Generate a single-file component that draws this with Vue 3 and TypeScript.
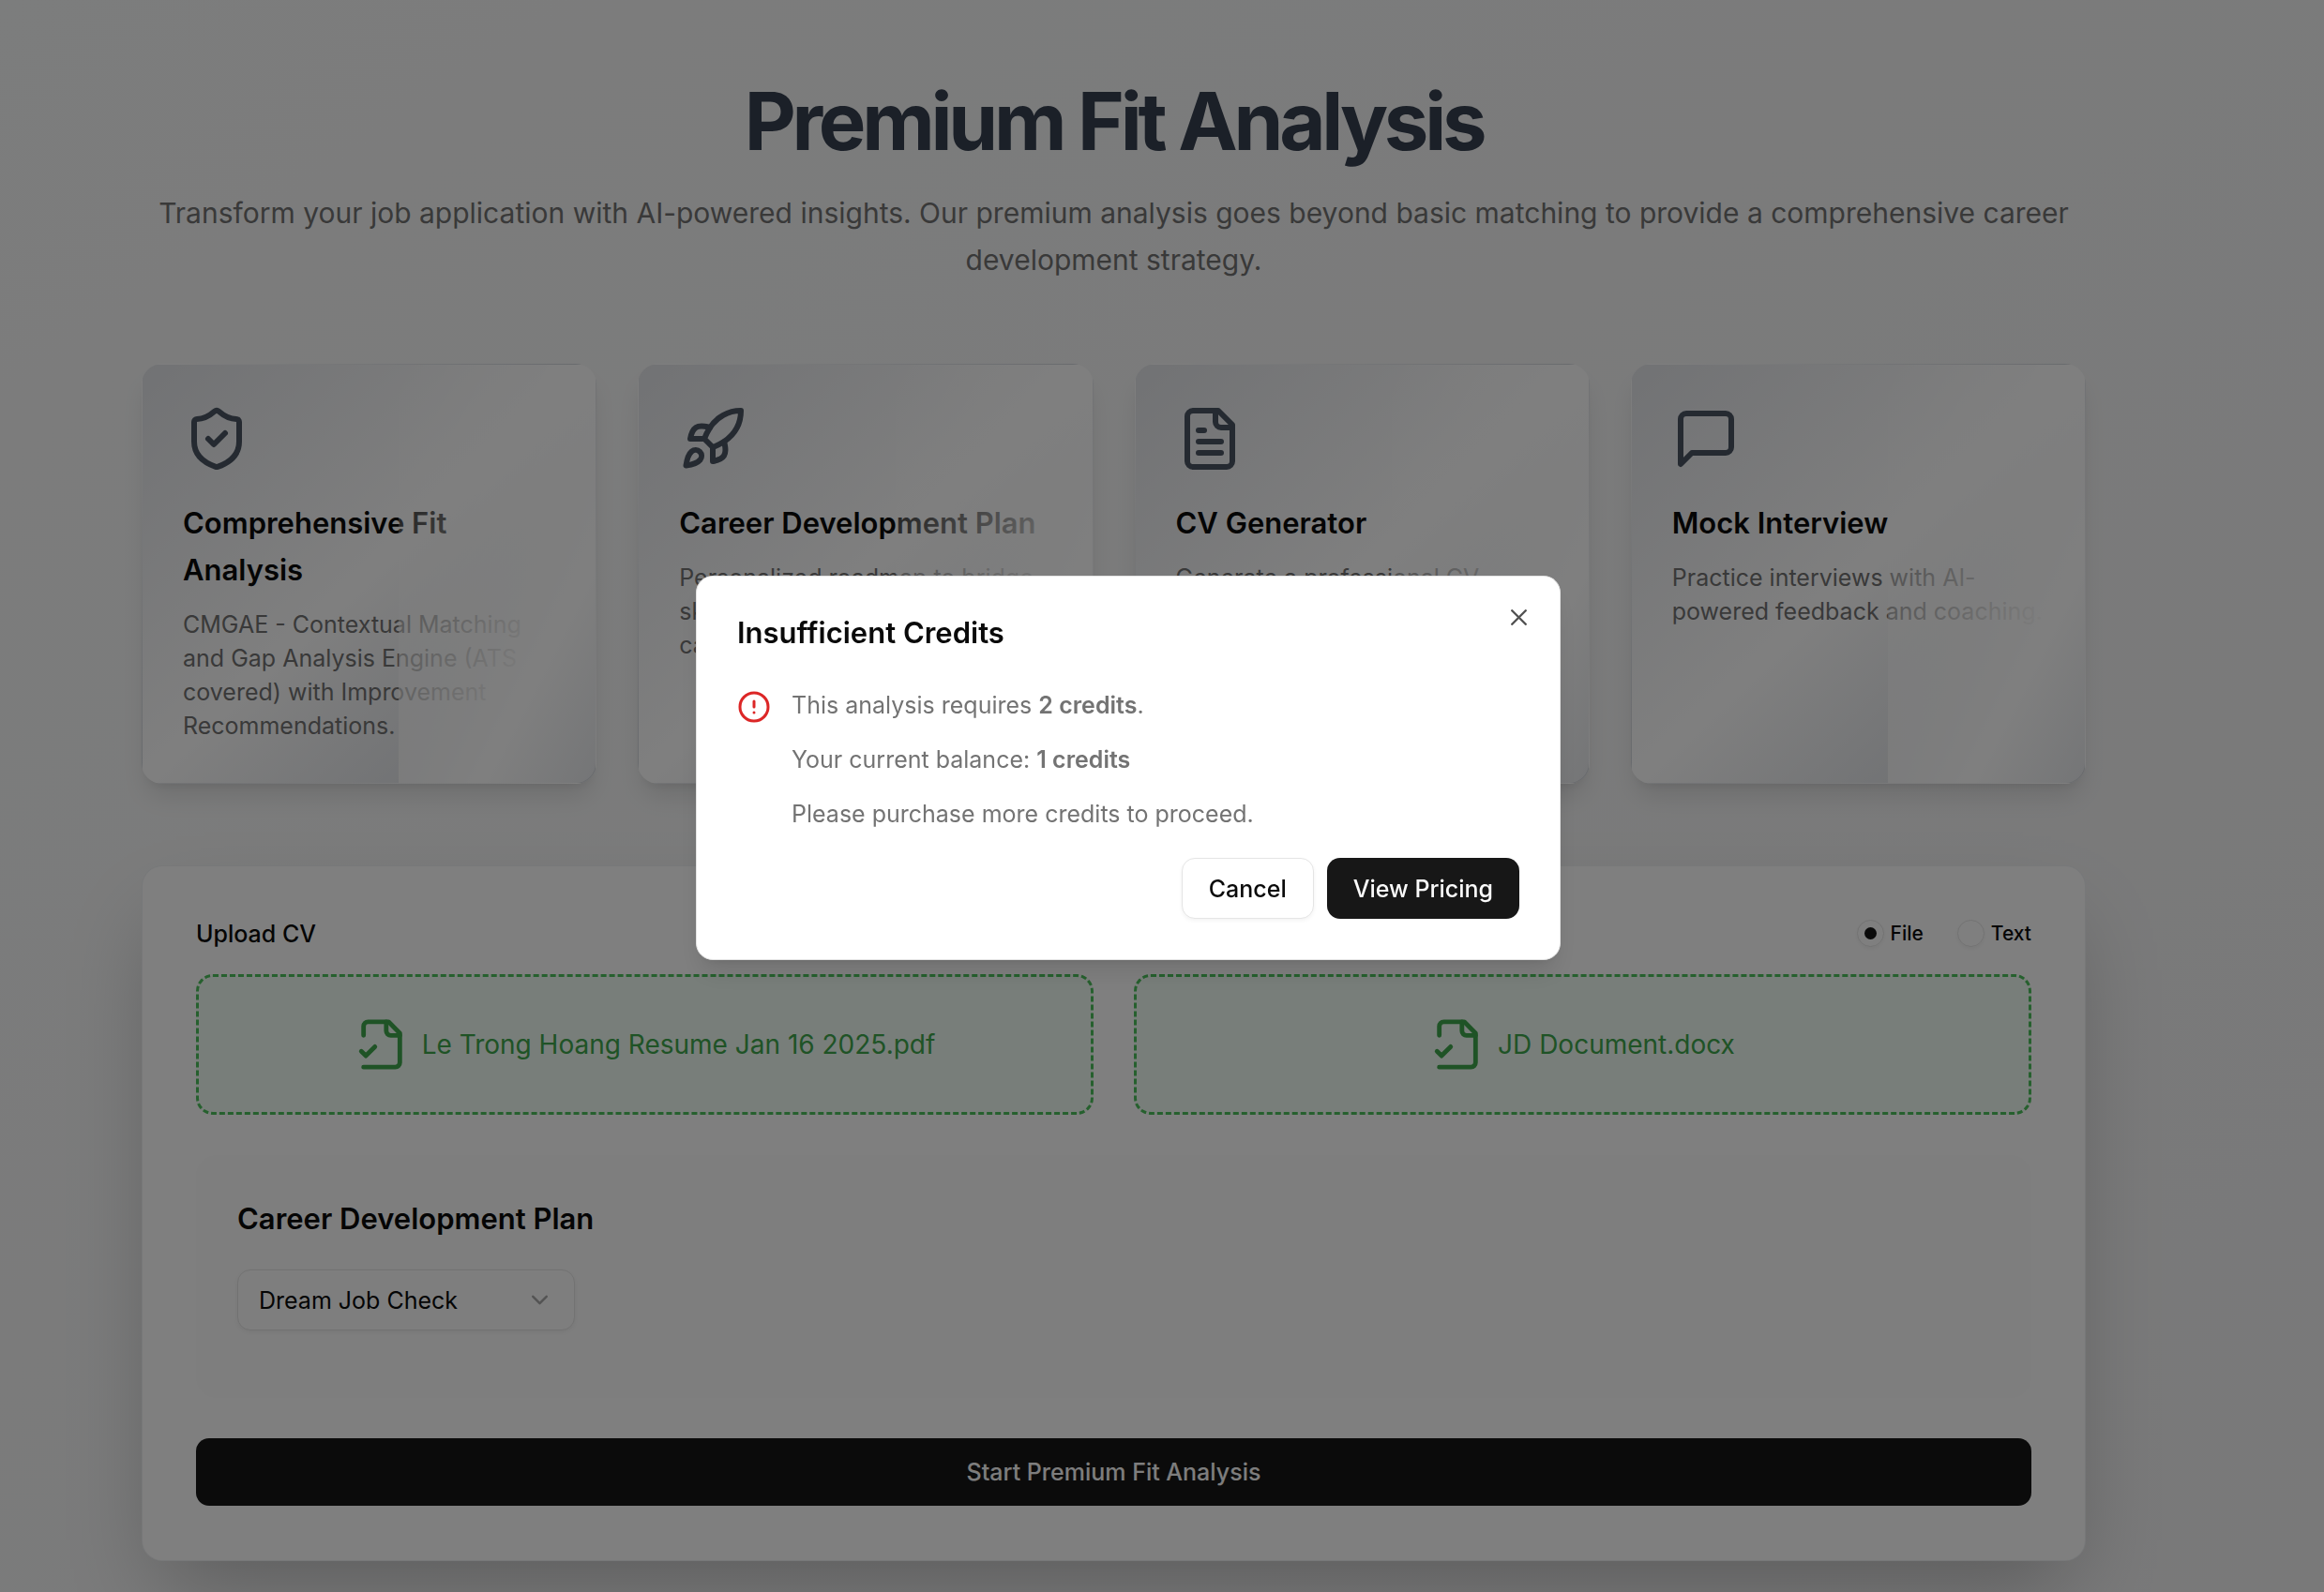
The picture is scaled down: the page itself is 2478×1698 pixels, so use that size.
<script setup lang="ts">
import { ref } from 'vue'

interface Feature {
  title: string
  description: string
  paths: string[]
}

interface Upload {
  id: string
  label: string
  file: string
}

const features: Feature[] = [
  {
    title: 'Comprehensive Fit Analysis',
    description:
      'CMGAE - Contextual Matching and Gap Analysis Engine (ATS covered) with Improvement Recommendations.',
    paths: [
      'M20 13c0 5-3.5 7.5-7.66 8.95a1 1 0 0 1-.67-.01C7.5 20.5 4 18 4 13V6a1 1 0 0 1 1-1c2 0 4.5-1.2 6.24-2.72a1.17 1.17 0 0 1 1.52 0C14.51 3.81 17 5 19 5a1 1 0 0 1 1 1z',
      'm9 12 2 2 4-4',
    ],
  },
  {
    title: 'Career Development Plan',
    description: 'Personalized roadmap to bridge skill gaps and achieve your career goals.',
    paths: [
      'M4.5 16.5c-1.5 1.26-2 5-2 5s3.74-.5 5-2c.71-.84.7-2.13-.09-2.91a2.18 2.18 0 0 0-2.91-.09z',
      'm12 15-3-3a22 22 0 0 1 2-3.95A12.88 12.88 0 0 1 22 2c0 2.72-.78 7.5-6 11a22.35 22.35 0 0 1-4 2z',
      'M9 12H4s.55-3.03 2-4c1.62-1.08 5 0 5 0',
      'M12 15v5s3.03-.55 4-2c1.08-1.62 0-5 0-5',
    ],
  },
  {
    title: 'CV Generator',
    description: 'Generate a professional CV',
    paths: [
      'M15 2H6a2 2 0 0 0-2 2v16a2 2 0 0 0 2 2h12a2 2 0 0 0 2-2V7Z',
      'M14 2v4a2 2 0 0 0 2 2h4',
      'M10 9H8',
      'M16 13H8',
      'M16 17H8',
    ],
  },
  {
    title: 'Mock Interview',
    description: 'Practice interviews with AI-powered feedback and coaching.',
    paths: ['M21 15a2 2 0 0 1-2 2H7l-4 4V5a2 2 0 0 1 2-2h14a2 2 0 0 1 2 2z'],
  },
]

const uploads: Upload[] = [
  { id: 'cv', label: 'Upload CV', file: 'Le Trong Hoang Resume Jan 16 2025.pdf' },
  { id: 'jd', label: '', file: 'JD Document.docx' },
]

const source = ref('file')
const plan = ref('dream')
const open = ref(true)
</script>

<template>
  <div class="page">
    <main class="container">
      <header class="hero">
        <h1>Premium Fit Analysis</h1>
        <p>
          Transform your job application with AI-powered insights. Our premium analysis goes beyond
          basic matching to provide a comprehensive career development strategy.
        </p>
      </header>

      <section class="features">
        <article v-for="feature in features" :key="feature.title" class="feature">
          <svg class="feature-icon" viewBox="0 0 24 24" aria-hidden="true">
            <path v-for="d in feature.paths" :key="d" :d="d" />
          </svg>
          <h2>{{ feature.title }}</h2>
          <p>{{ feature.description }}</p>
        </article>
      </section>

      <section class="panel">
        <div class="uploads">
          <div v-for="upload in uploads" :key="upload.id" class="upload">
            <div class="upload-head">
              <span v-if="upload.label" class="upload-label">{{ upload.label }}</span>
              <div v-if="upload.id === 'jd'" class="modes">
                <label class="mode"><input v-model="source" type="radio" name="source" value="file" />File</label>
                <label class="mode"><input v-model="source" type="radio" name="source" value="text" />Text</label>
              </div>
            </div>
            <button type="button" class="dropzone">
              <svg class="file-icon" viewBox="0 0 24 24" aria-hidden="true">
                <path d="M4 22h14a2 2 0 0 0 2-2V7l-5-5H6a2 2 0 0 0-2 2v4" />
                <path d="M14 2v4a2 2 0 0 0 2 2h4" />
                <path d="m3 15 2 2 4-4" />
              </svg>
              <span>{{ upload.file }}</span>
            </button>
          </div>
        </div>

        <div class="plan">
          <h2 id="plan-title">Career Development Plan</h2>
          <div class="select-wrap">
            <select v-model="plan" aria-labelledby="plan-title">
              <option value="dream">Dream Job Check</option>
            </select>
            <svg class="chevron" viewBox="0 0 24 24" aria-hidden="true"><path d="m6 9 6 6 6-6" /></svg>
          </div>
        </div>

        <button type="button" class="btn start">Start Premium Fit Analysis</button>
      </section>
    </main>

    <div v-if="open" class="overlay">
      <div class="dialog" role="dialog" aria-modal="true" aria-labelledby="dialog-title">
        <button type="button" class="close" aria-label="Close" @click="open = false">
          <svg viewBox="0 0 24 24" aria-hidden="true"><path d="M18 6 6 18" /><path d="m6 6 12 12" /></svg>
        </button>
        <h2 id="dialog-title">Insufficient Credits</h2>
        <div class="notice">
          <svg class="alert-icon" viewBox="0 0 24 24" aria-hidden="true">
            <circle cx="12" cy="12" r="10" />
            <path d="M12 8v4" />
            <path d="M12 16h.01" />
          </svg>
          <div class="notice-text">
            <p>This analysis requires <strong>2 credits</strong>.</p>
            <p>Your current balance: <strong>1 credits</strong></p>
            <p>Please purchase more credits to proceed.</p>
          </div>
        </div>
        <div class="actions">
          <button type="button" class="btn outline" @click="open = false">Cancel</button>
          <button type="button" class="btn primary">View Pricing</button>
        </div>
      </div>
    </div>
  </div>
</template>

<style>
body {
  margin: 0;
}
</style>

<style scoped>
.page {
  box-sizing: border-box;
  min-height: 100vh;
  padding: 87px 254px 32px 151px;
  background: linear-gradient(to bottom right, #f9fafa, #f2f2f3);
  color: #0a0a0a;
  font-family: Inter, 'Liberation Sans', sans-serif;
  font-size: 25px;
  line-height: 36px;
}

.page *,
.page *::before,
.page *::after {
  box-sizing: border-box;
}

h1,
h2,
p {
  margin: 0;
}

button,
select {
  font: inherit;
  color: inherit;
}

svg {
  display: block;
  flex: none;
  fill: none;
  stroke: currentColor;
  stroke-width: 2;
  stroke-linecap: round;
  stroke-linejoin: round;
}

h2 {
  font-size: 31px;
  font-weight: 600;
  line-height: 50px;
}

.hero {
  display: flex;
  flex-direction: column;
  gap: 29px;
  margin-bottom: 86px;
  text-align: center;
}

.hero h1 {
  color: #374151;
  font-size: 85px;
  font-weight: 700;
  line-height: 86px;
  letter-spacing: -0.05em;
}

.hero p {
  color: #737373;
  font-size: 30px;
  line-height: 50px;
}

.features {
  display: grid;
  grid-template-columns: repeat(4, 1fr);
  gap: 44px;
  margin-bottom: 87px;
}

.feature {
  position: relative;
  overflow: hidden;
  padding: 43px;
  border: 1px solid transparent;
  border-radius: 22px;
  background: linear-gradient(to bottom right, #e3e5e9, #ffffff, #d1d5db);
  box-shadow: 0 18px 27px -5px rgba(0, 0, 0, 0.1), 0 7px 11px -7px rgba(0, 0, 0, 0.1);
}

/* sheen over the right part of the card */
.feature::after {
  content: '';
  position: absolute;
  top: 0;
  right: -80px;
  width: 60%;
  height: 125%;
  background: linear-gradient(to bottom right, rgba(255, 255, 255, 0), #ffffff 55%, #d1d5db);
}

.feature-icon {
  width: 72px;
  height: 72px;
  margin-bottom: 29px;
  color: #4b5563;
}

.feature h2 {
  margin-bottom: 15px;
}

.feature p {
  color: #737373;
}

.panel {
  display: flex;
  flex-direction: column;
  gap: 43px;
  padding: 57px 57px 58px;
  border: 1px solid rgba(229, 231, 235, 0.6);
  border-radius: 22px;
  background: #ffffff;
  box-shadow: 0 45px 90px -22px rgba(0, 0, 0, 0.25);
}

.uploads {
  display: grid;
  grid-template-columns: repeat(2, 1fr);
  gap: 43px;
}

.upload {
  display: flex;
  flex-direction: column;
  gap: 29px;
}

.upload-head {
  display: flex;
  align-items: center;
  height: 29px;
}

.upload-label {
  font-weight: 500;
}

.modes {
  display: flex;
  gap: 36px;
  margin-left: auto;
}

.mode {
  display: flex;
  align-items: center;
  gap: 7px;
  font-size: 21px;
  font-weight: 500;
  line-height: 29px;
}

.mode input {
  appearance: none;
  display: grid;
  place-items: center;
  width: 29px;
  height: 29px;
  margin: 0;
  border: 1px solid #e5e5e5;
  border-radius: 50%;
  box-shadow: 0 2px 4px rgba(0, 0, 0, 0.05);
}

.mode input:checked::before {
  content: '';
  width: 13px;
  height: 13px;
  border-radius: 50%;
  background: #171717;
}

.dropzone {
  display: flex;
  align-items: center;
  justify-content: center;
  gap: 14px;
  height: 150px;
  padding: 0 43px;
  border: 3px dashed #4cc05c;
  border-radius: 18px;
  background: #f1fcf4;
  color: #3ea64c;
  font-size: 28px;
}

.file-icon {
  width: 58px;
  height: 58px;
}

.plan {
  display: flex;
  flex-direction: column;
  align-items: flex-start;
  gap: 29px;
  padding: 43px 44px 72px;
  border-radius: 22px;
  background: #fcfcfc;
}

.select-wrap {
  position: relative;
  width: 360px;
}

select {
  appearance: none;
  display: block;
  width: 100%;
  height: 65px;
  padding: 0 22px;
  border: 1px solid #e5e5e5;
  border-radius: 14px;
  background: #fcfcfc;
  box-shadow: 0 2px 4px rgba(0, 0, 0, 0.05);
}

.chevron {
  position: absolute;
  top: 18px;
  right: 23px;
  width: 29px;
  height: 29px;
  opacity: 0.35;
  pointer-events: none;
}

.btn {
  height: 65px;
  padding: 0 27px;
  border: 1px solid transparent;
  border-radius: 14px;
  font-weight: 500;
}

.primary,
.start {
  background: #171717;
  color: #fafafa;
}

.start {
  height: 72px;
}

.outline {
  padding: 0 28px;
  border-color: #e5e5e5;
  background: #ffffff;
  box-shadow: 0 2px 4px rgba(0, 0, 0, 0.05);
}

.overlay {
  position: fixed;
  inset: 0;
  display: flex;
  align-items: center;
  justify-content: center;
  padding: 0 72px 60px 0;
  background: rgba(0, 0, 0, 0.5);
}

.dialog {
  position: relative;
  display: flex;
  flex-direction: column;
  width: 922px;
  padding: 43px;
  border: 1px solid #e5e5e5;
  border-radius: 18px;
  background: #ffffff;
  box-shadow: 0 18px 27px -5px rgba(0, 0, 0, 0.1), 0 7px 11px -7px rgba(0, 0, 0, 0.1);
}

.dialog h2 {
  margin-bottom: 43px;
  line-height: 33px;
}

.close {
  position: absolute;
  top: 29px;
  right: 29px;
  padding: 0;
  border: 0;
  background: none;
  opacity: 0.7;
}

.close svg {
  width: 29px;
  height: 29px;
}

.notice {
  display: flex;
  align-items: flex-start;
  gap: 22px;
  margin-bottom: 29px;
  color: #737373;
}

.alert-icon {
  width: 36px;
  height: 36px;
  margin-top: 2px;
  color: #dc2626;
}

.notice-text {
  display: flex;
  flex-direction: column;
  gap: 22px;
}

strong {
  font-weight: 600;
}

.actions {
  display: flex;
  justify-content: flex-end;
  gap: 14px;
}
</style>
